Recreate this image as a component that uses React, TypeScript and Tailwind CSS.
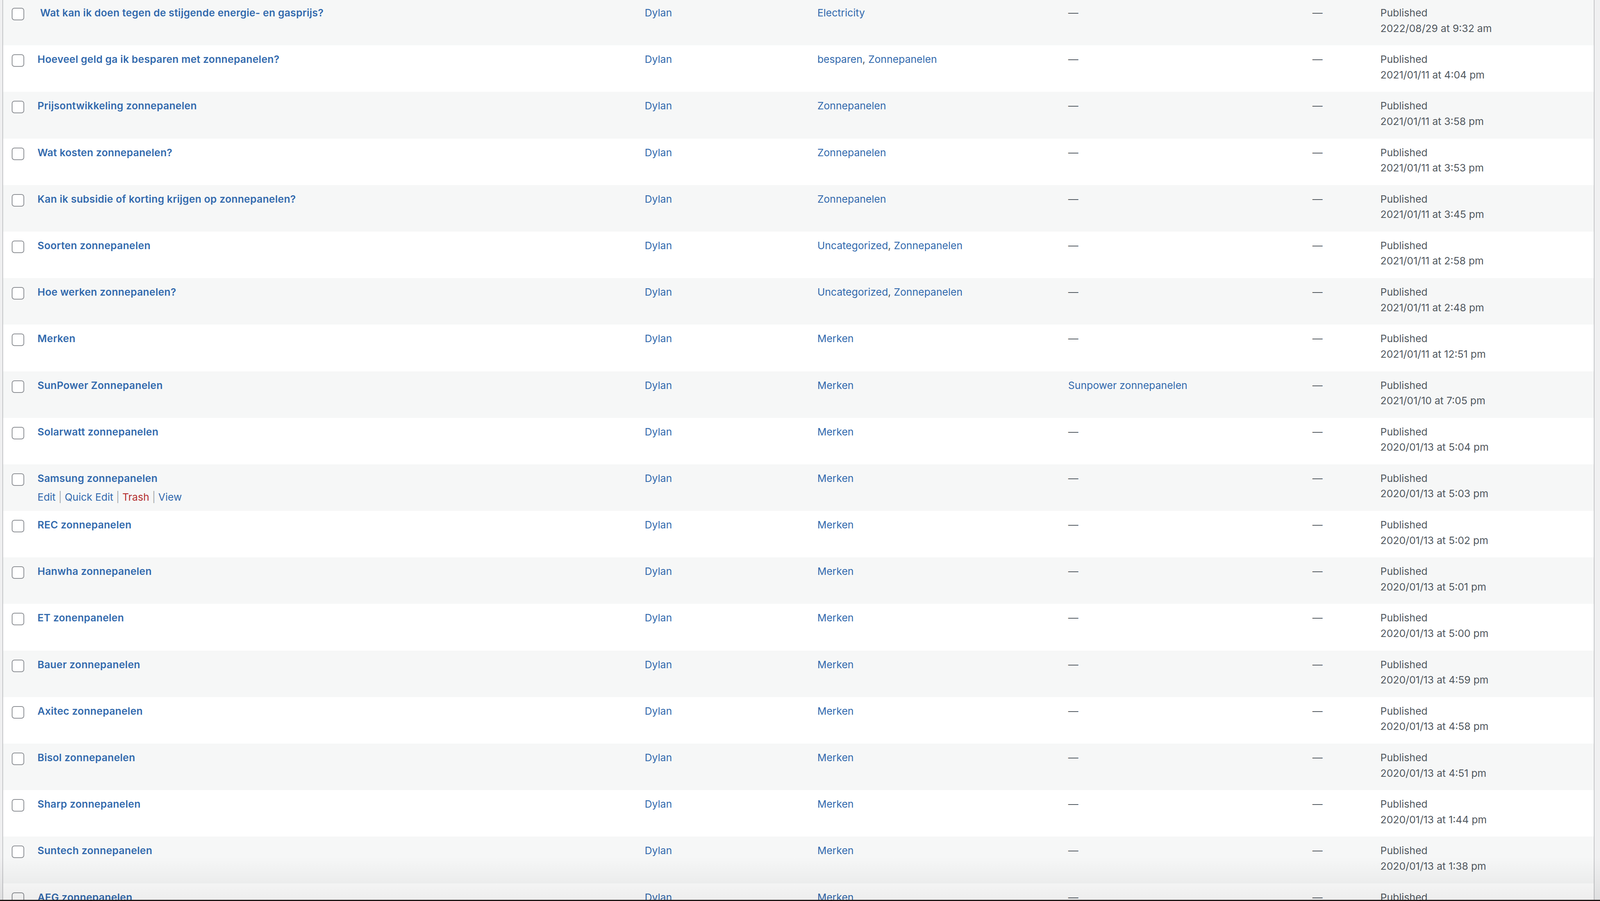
import React from "react";

type Post = {
  title: string;
  cats: string[];
  tags?: string;
  date: string;
  hover?: boolean;
};

const posts: Post[] = [
  { title: "\u00a0Wat kan ik doen tegen de stijgende energie- en gasprijs?", cats: ["Electricity"], date: "2022/08/29 at 9:32 am" },
  { title: "Hoeveel geld ga ik besparen met zonnepanelen?", cats: ["besparen", "Zonnepanelen"], date: "2021/01/11 at 4:04 pm" },
  { title: "Prijsontwikkeling zonnepanelen", cats: ["Zonnepanelen"], date: "2021/01/11 at 3:58 pm" },
  { title: "Wat kosten zonnepanelen?", cats: ["Zonnepanelen"], date: "2021/01/11 at 3:53 pm" },
  { title: "Kan ik subsidie of korting krijgen op zonnepanelen?", cats: ["Zonnepanelen"], date: "2021/01/11 at 3:45 pm" },
  { title: "Soorten zonnepanelen", cats: ["Uncategorized", "Zonnepanelen"], date: "2021/01/11 at 2:58 pm" },
  { title: "Hoe werken zonnepanelen?", cats: ["Uncategorized", "Zonnepanelen"], date: "2021/01/11 at 2:48 pm" },
  { title: "Merken", cats: ["Merken"], date: "2021/01/11 at 12:51 pm" },
  { title: "SunPower Zonnepanelen", cats: ["Merken"], tags: "Sunpower zonnepanelen", date: "2021/01/10 at 7:05 pm" },
  { title: "Solarwatt zonnepanelen", cats: ["Merken"], date: "2020/01/13 at 5:04 pm" },
  { title: "Samsung zonnepanelen", cats: ["Merken"], date: "2020/01/13 at 5:03 pm", hover: true },
  { title: "REC zonnepanelen", cats: ["Merken"], date: "2020/01/13 at 5:02 pm" },
  { title: "Hanwha zonnepanelen", cats: ["Merken"], date: "2020/01/13 at 5:01 pm" },
  { title: "ET zonenpanelen", cats: ["Merken"], date: "2020/01/13 at 5:00 pm" },
  { title: "Bauer zonnepanelen", cats: ["Merken"], date: "2020/01/13 at 4:59 pm" },
  { title: "Axitec zonnepanelen", cats: ["Merken"], date: "2020/01/13 at 4:58 pm" },
  { title: "Bisol zonnepanelen", cats: ["Merken"], date: "2020/01/13 at 4:51 pm" },
  { title: "Sharp zonnepanelen", cats: ["Merken"], date: "2020/01/13 at 1:44 pm" },
  { title: "Suntech zonnepanelen", cats: ["Merken"], date: "2020/01/13 at 1:38 pm" },
  { title: "AEG zonnepanelen", cats: ["Merken"], date: "2020/01/13 at 1:33 pm" },
];

function Dash() {
  return <span className="text-[#50575e]">—</span>;
}

function RowActions({ visible }: { visible?: boolean }) {
  return (
    <div className={visible ? "pt-[4px] leading-[39px] whitespace-nowrap" : "pt-[4px] leading-[39px] whitespace-nowrap invisible"}>
      <a className="text-[#3169ad]">Edit</a>
      <span className="text-[#a7aaad]"> | </span>
      <a className="text-[#3169ad]">Quick Edit</a>
      <span className="text-[#a7aaad]"> | </span>
      <a className="text-[#b32d2e]">Trash</a>
      <span className="text-[#a7aaad]"> | </span>
      <a className="text-[#3169ad]">View</a>
    </div>
  );
}

function PostRow({ post, striped }: { post: Post; striped: boolean }) {
  return (
    <div
      className={
        "grid grid-cols-[68px_1738fr_494fr_718fr_699fr_174px_633fr] " +
        (striped ? "bg-[#f6f7f7]" : "bg-white")
      }
    >
      <div className="pl-[22px] pt-[23px]">
        <div className="w-[32px] h-[32px] rounded-[7px] border-2 border-[#8c8f94] bg-white" />
      </div>
      <div className="min-w-0 px-[20px] py-[16px]">
        <strong className="block font-semibold tracking-[0.01em] leading-[39px] mb-[0.2em] text-[#3169ad] whitespace-nowrap">
          {post.title}
        </strong>
        <RowActions visible={post.hover} />
      </div>
      <div className="min-w-0 px-[20px] py-[16px] leading-[39px] text-[#3169ad]">Dylan</div>
      <div className="min-w-0 px-[20px] py-[16px] leading-[39px] whitespace-nowrap">
        {post.cats.map((c, i) => (
          <React.Fragment key={c}>
            {i > 0 && <span className="text-[#50575e]">, </span>}
            <a className="text-[#3169ad]">{c}</a>
          </React.Fragment>
        ))}
      </div>
      <div className="min-w-0 px-[20px] py-[16px] leading-[39px] whitespace-nowrap">
        {post.tags ? <a className="text-[#3169ad]">{post.tags}</a> : <Dash />}
      </div>
      <div className="min-w-0 px-[20px] py-[16px] leading-[39px]">
        <Dash />
      </div>
      <div className="min-w-0 px-[20px] py-[16px] leading-[39.5px] text-[#50575e] whitespace-nowrap">
        Published
        <br />
        {post.date}
      </div>
    </div>
  );
}

export default function App() {
  return (
    <div
      className="relative h-[2307px] w-full overflow-hidden bg-[#f0f0f1] text-[26px]"
      style={{ fontFamily: 'Inter, "Noto Sans", "Liberation Sans", sans-serif' }}
    >
      <div className="ml-[6px] mr-[14px] -mt-[3px] border-x-2 border-[#c3c4c7]">
        {posts.map((p, i) => (
          <PostRow key={p.title} post={p} striped={i % 2 === 0} />
        ))}
      </div>
      <div className="pointer-events-none absolute inset-x-0 bottom-[3px] h-[110px] bg-gradient-to-b from-transparent to-black/[0.07]" />
      <div className="absolute inset-x-0 bottom-0 h-[3px] bg-[#1c1414]" />
    </div>
  );
}
